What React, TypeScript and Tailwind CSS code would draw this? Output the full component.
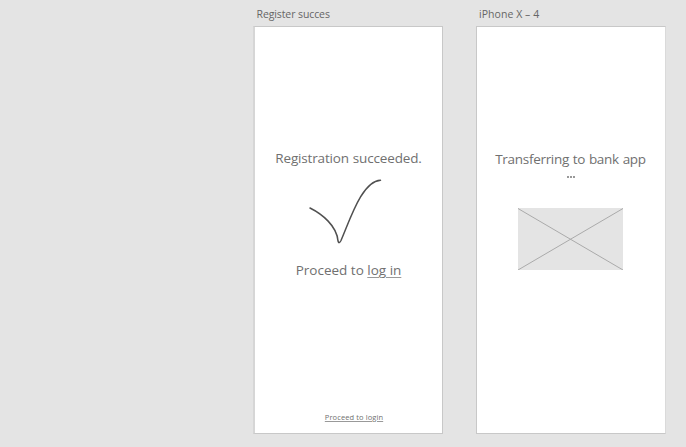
import type { ReactNode } from "react";

function Artboard({ title, frame, children }: { title: ReactNode; frame: string; children: ReactNode }) {
  return (
    <section className="flex shrink-0 flex-col">
      <h2 className="flex h-[26px] items-start pt-[7px] pl-[3px] text-[10.5px] leading-[14px] text-[#666]">{title}</h2>
      <div className={"flex h-[408px] flex-col items-center border-y border-[#c8c8c8] bg-white " + frame}>{children}</div>
    </section>
  );
}

export default function App() {
  return (
    <main className="flex h-[447px] w-[686px] gap-[33px] overflow-hidden bg-[#e4e4e4] pl-[253px] font-['Open_Sans','Noto_Sans',sans-serif] whitespace-nowrap text-[#707070]">
      <Artboard
        title={<span className="pl-[0.5px] tracking-[-0.1px]">Register succes</span>}
        frame="w-[190px] border-r border-l-2 border-l-[#d6d6d6]"
      >
        <p className="mt-[121px] text-[13.5px] leading-5 tracking-[-0.16px] [word-spacing:0.5px]">Registration succeeded.</p>
        <svg className="mt-[8px] mr-[8px] block h-[70px] w-[80px]" viewBox="305 176 80 70" fill="none" stroke="#505050" strokeWidth="1.5" strokeLinecap="round">
          <path d="M310 208C322 214 337 226 338 241Q339 244.5 341 240.5C350 220 362 181 380.5 180.3" />
        </svg>
        <p className="mt-[14px] text-[13.5px] leading-5">
          Proceed to <a className="underline decoration-[#999] decoration-1 underline-offset-2">log in</a>
        </p>
        <a className="mt-[132px] ml-[11px] text-[7.5px] leading-[10px] tracking-[0.1px] underline decoration-[#999] decoration-1 underline-offset-1">Proceed to login</a>
      </Artboard>
      <Artboard
        title={<span className="tracking-[0.06px]">iPhone X – 4</span>}
        frame="w-[190px] border-x border-r-[#dadada] pr-px"
      >
        <p className="mt-[122px] text-[13.5px] leading-5 tracking-[-0.3px] [word-spacing:0.6px]">Transferring to bank app</p>
        <div className="mt-[7px] flex h-[2px] gap-[1px]">
          <i className="h-[2px] w-[2px] bg-[#999]" />
          <i className="h-[2px] w-[2px] bg-[#999]" />
          <i className="h-[2px] w-[2px] bg-[#999]" />
        </div>
        <svg className="mt-[30px] block h-[62px] w-[105px] bg-[#e4e4e4]" viewBox="0 0 105 62" stroke="#aaa" strokeWidth="1">
          <path d="M0 .5L105 62M105 .5L0 62" />
        </svg>
      </Artboard>
    </main>
  );
}
